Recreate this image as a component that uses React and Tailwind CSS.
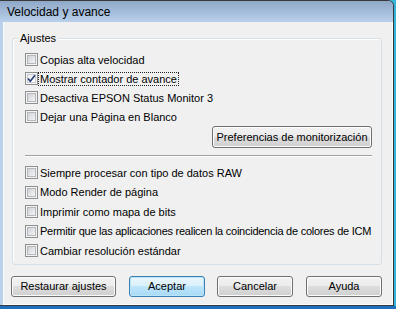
import React from 'react';

const Box = ({ checked }) => (
  <div className="relative w-[13px] h-[13px] shrink-0 border border-[#8e8f8f] bg-[#f4f4f4] p-[1px]">
    <div
      className={
        checked
          ? 'w-full h-full border border-[#c9ccd1] bg-[linear-gradient(135deg,#eceef1,#ffffff)]'
          : 'w-full h-full border border-[#b4b8bd] bg-[linear-gradient(135deg,#cfd2d6,#f5f5f6)]'
      }
    />
    {checked && (
      <svg className="absolute left-0 top-0" width="11" height="11" viewBox="0 0 11 11">
        <path d="M2 5.5 L4.3 8.2 L9 2.2" fill="none" stroke="#2b3f7a" strokeWidth="1.7" />
      </svg>
    )}
  </div>
);

const Row = ({ label, checked, focus, tall, tight }) => (
  <div className={`flex items-center whitespace-nowrap ${tall ? 'h-[19.5px]' : 'h-[19px]'}`}>
    <Box checked={checked} />
    <span
      className={`px-[1px] leading-[12px] border ${tight ? 'tracking-[-0.25px]' : ''} ${
        focus ? 'border-dotted border-[#222]' : 'border-transparent'
      }`}
    >
      {label}
    </span>
  </div>
);

const Btn = ({ children, w, primary, className = '' }) => (
  <button
    className={`h-[21px] ${w} rounded-[3px] border text-[11px] leading-none text-black whitespace-nowrap ${
      primary
        ? 'border-[#3c7fb1] bg-[linear-gradient(#eaf6fd,#d9f0fc_50%,#bee6fd_50%,#a7d9f5)] shadow-[inset_0_0_0_1px_#b9e6fb]'
        : 'border-[#707070] bg-[linear-gradient(#f2f2f2,#ebebeb_50%,#dddddd_50%,#cfcfcf)] shadow-[inset_0_0_0_1px_#fcfcfc]'
    } ${className}`}
  >
    {children}
  </button>
);

const App = () => {
  const top = [
    { label: 'Copias alta velocidad' },
    { label: 'Mostrar contador de avance', checked: true, focus: true },
    { label: 'Desactiva EPSON Status Monitor 3' },
    { label: 'Dejar una Página en Blanco' },
  ];
  const bottom = [
    { label: 'Siempre procesar con tipo de datos RAW' },
    { label: 'Modo Render de página' },
    { label: 'Imprimir como mapa de bits' },
    { label: 'Permitir que las aplicaciones realicen la coincidencia de colores de ICM', tight: true },
    { label: 'Cambiar resolución estándar' },
  ];

  return (
    <div className="w-[396px] h-[309px] flex flex-col bg-[#34b4d8] overflow-hidden font-['Liberation_Sans',Arial,sans-serif] text-[11px] text-black">
      <div className="flex">
        {/* window */}
        <div className="w-[394px] h-[306px] flex flex-col border-t border-r border-b border-[#3a3a3a] rounded-tr-[6px] bg-[#b9d1ea]">
          <div className="h-[21px] shrink-0 flex items-center pl-[7px] text-[12px] rounded-tr-[5px] bg-[linear-gradient(#8fa8c8,#b8d0ea)]">
            Velocidad y avance
          </div>
          <div className="flex-1 flex pl-[3px] min-w-0">
            <div className="flex-1 min-w-0 flex flex-col bg-[#f0f0f0] border-l border-r border-b border-[#fbfcfd]">
              {/* group box */}
              <fieldset className="mt-[9px] ml-[8px] mr-[10px] border border-[#d5dfe5] rounded-[3px] shadow-[inset_1px_1px_0_#fff] pb-[3px] min-w-0">
                <legend className="ml-[5px] px-[2px] leading-[14px] bg-[#f0f0f0]">Ajustes</legend>
                <div className="flex flex-col pl-[12px] pr-[9px] pt-[5px]">
                  {top.map((r) => (
                    <Row key={r.label} {...r} />
                  ))}
                  <div className="flex justify-end">
                    <Btn w="w-[160px]" className="h-[22px]">Preferencias de monitorización</Btn>
                  </div>
                  <div className="mt-[7px] h-[2px] border-t border-[#a0a0a0] border-b border-b-white" />
                  <div className="mt-[6px] flex flex-col">
                    {bottom.map((r) => (
                      <Row key={r.label} {...r} tall />
                    ))}
                  </div>
                </div>
              </fieldset>
              {/* buttons */}
              <div className="mt-[11px] flex pl-[7px]">
                <Btn w="w-[105px]">Restaurar ajustes</Btn>
                <Btn w="w-[76px]" primary className="ml-[13px]">Aceptar</Btn>
                <Btn w="w-[76px]" className="ml-[12px]">Cancelar</Btn>
                <Btn w="w-[76px]" className="ml-[13px]">Ayuda</Btn>
              </div>
            </div>
          </div>
        </div>
      </div>
      <div className="flex-1 bg-[#1f6fbf]" />
    </div>
  );
};

export default App;
